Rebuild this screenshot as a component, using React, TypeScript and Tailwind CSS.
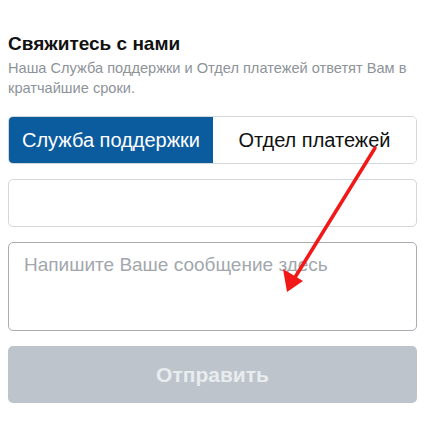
import React from "react";

export default function App() {
  return (
    <div className="relative w-[435px] h-[423px] bg-white overflow-hidden" style={{ fontFamily: '"Liberation Sans", Arial, sans-serif' }}>
      <div className="pl-2 pr-[18px] pt-[32px]">
        <h1 className="text-[19px] leading-[24px] font-bold text-[#111]">Свяжитесь с нами</h1>
        <p className="mt-[2px] text-[14.6px] leading-[20px] text-[#8e9399]">
          Наша Служба поддержки и Отдел платежей ответят Вам в кратчайшие сроки.
        </p>
        <div className="mt-[18px] flex h-[48px] rounded-[5px] border border-[#d3d6da] overflow-hidden">
          <div className="w-[204px] flex items-center justify-center bg-[#0b5b9f] text-white text-[20px]">
            Служба поддержки
          </div>
          <div className="flex-1 flex items-center justify-center bg-white text-[#111] text-[20px]">
            Отдел платежей
          </div>
        </div>
        <div className="mt-[15px] h-[48px] rounded-[5px] border border-[#d3d6da] bg-white"></div>
        <div className="mt-[15px] h-[89px] rounded-[5px] border border-[#a9adb2] bg-white px-[15px] pt-[10px]">
          <span className="text-[19px] leading-[24px] text-[#a3a7ad]">Напишите Ваше сообщение здесь</span>
        </div>
        <div className="mt-[15px] h-[57px] rounded-[5px] bg-[#bdc4cc] flex items-center justify-center">
          <span className="text-[21px] font-bold text-[#e9ecef]">Отправить</span>
        </div>
      </div>
      <svg className="absolute left-0 top-0 pointer-events-none" width="435" height="423" viewBox="0 0 435 423">
        <line x1="375" y1="148" x2="294" y2="279" stroke="#f21818" strokeWidth="3.5" strokeLinecap="round" />
        <polygon points="287,292 283,269 303,281" fill="#f21818" />
      </svg>
    </div>
  );
}
